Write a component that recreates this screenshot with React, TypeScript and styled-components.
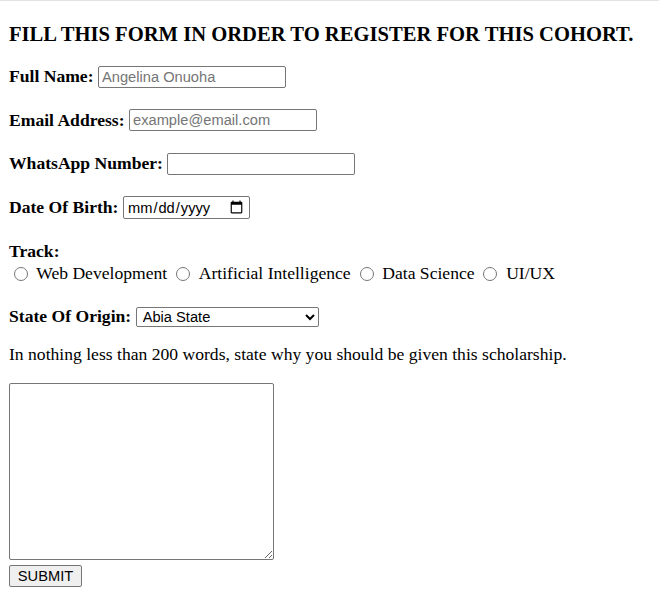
import styled, { createGlobalStyle } from "styled-components";

const Global = createGlobalStyle`
  html {
    border-top: 1px solid #e3e3e3;
  }
  body {
    margin: 0;
    font-family: "Liberation Serif", "Times New Roman", serif;
    font-size: 17.6px;
    color: #000;
    background: #fff;
  }
`;

const Form = styled.form`
  display: flex;
  flex-direction: column;
  align-items: flex-start;
  padding: 21.6px 9px 0;
`;

const Heading = styled.h3`
  font-size: 20.6px;
  font-weight: bold;
  line-height: normal;
  margin: 0 0 20px;
`;

const Field = styled.div<{ $after?: number }>`
  display: flex;
  align-items: center;
  gap: 4.5px;
  height: 22px;
  margin-bottom: ${(p) => p.$after ?? 21.67}px;
`;

const Group = styled.div`
  display: flex;
  flex-direction: column;
  margin-bottom: 21.67px;
`;

const Line = styled.div`
  display: flex;
  align-items: center;
  height: 22px;
`;

const Label = styled.b`
  font-weight: bold;
  white-space: nowrap;
`;

const TextInput = styled.input`
  box-sizing: border-box;
  width: 188px;
  height: 22px;
  padding: 1px 3px;
  border: 1px solid #767676;
  border-radius: 2px;
  font-family: "Liberation Sans", Arial, sans-serif;
  font-size: 14.67px;
  &::placeholder {
    color: #757575;
  }
`;

const DateInput = styled.input`
  box-sizing: border-box;
  width: 127px;
  height: 23px;
  padding: 1px 3px;
  border: 1px solid #767676;
  border-radius: 2px;
  font-family: "Liberation Sans", Arial, sans-serif;
  font-size: 14.67px;
`;

const Option = styled.label`
  display: inline-flex;
  align-items: center;
  margin-right: 4.4px;
  white-space: nowrap;
`;

const Radio = styled.input`
  width: 14px;
  height: 14px;
  margin: 1px 8.7px 0 4.5px;
`;

const Select = styled.select`
  box-sizing: border-box;
  width: 183px;
  height: 20px;
  padding: 0 2px;
  border: 1px solid #767676;
  border-radius: 2px;
  font-family: "Liberation Sans", Arial, sans-serif;
  font-size: 14.67px;
  color: #000;
  background: #fff;
`;

const Prompt = styled.p`
  display: flex;
  align-items: center;
  height: 22px;
  margin: 0 0 17px;
`;

const Essay = styled.textarea`
  box-sizing: border-box;
  width: 265px;
  height: 177px;
  border: 1px solid #767676;
  border-radius: 2px;
  margin: 0 0 5px;
`;

const Submit = styled.button`
  box-sizing: border-box;
  width: 73px;
  height: 22px;
  padding: 0 6px;
  border: 1px solid #767676;
  border-radius: 2px;
  background: #efefef;
  font-family: "Liberation Sans", Arial, sans-serif;
  font-size: 14.67px;
  color: #000;
`;

const tracks = [
  "Web Development",
  "Artificial Intelligence",
  "Data Science",
  "UI/UX",
];

export default function App() {
  return (
    <>
      <Global />
      <Form onSubmit={(e) => e.preventDefault()}>
        <Heading>FILL THIS FORM IN ORDER TO REGISTER FOR THIS COHORT.</Heading>
        <Field>
          <Label>Full Name:</Label>
          <TextInput type="text" placeholder="Angelina Onuoha" />
        </Field>
        <Field>
          <Label>Email Address:</Label>
          <TextInput type="email" placeholder="example@email.com" />
        </Field>
        <Field>
          <Label>WhatsApp Number:</Label>
          <TextInput type="tel" />
        </Field>
        <Field>
          <Label>Date Of Birth:</Label>
          <DateInput type="date" />
        </Field>
        <Group>
          <Line>
            <Label>Track:</Label>
          </Line>
          <Line>
            {tracks.map((t) => (
              <Option key={t}>
                <Radio type="radio" name="track" value={t} />
                {t}
              </Option>
            ))}
          </Line>
        </Group>
        <Field $after={16}>
          <Label>State Of Origin:</Label>
          <Select defaultValue="Abia State">
            <option>Abia State</option>
            <option>Lagos State</option>
          </Select>
        </Field>
        <Prompt>In nothing less than 200 words, state why you should be given this scholarship.</Prompt>
        <Essay />
        <Submit type="submit">SUBMIT</Submit>
      </Form>
    </>
  );
}
